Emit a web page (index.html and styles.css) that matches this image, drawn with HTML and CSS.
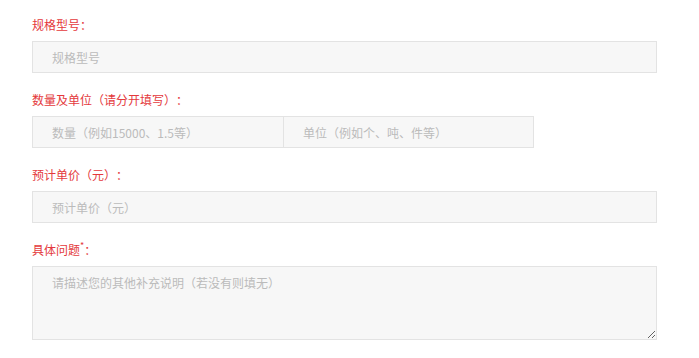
FILE: index.html
```html
<!DOCTYPE html>
<html lang="zh-CN">
<head>
<meta charset="utf-8">
<link rel="stylesheet" href="styles.css">
</head>
<body>
<form class="form">
  <div class="field">
    <label class="label">规格型号：</label>
    <input class="input" type="text" placeholder="规格型号">
  </div>
  <div class="field">
    <label class="label">数量及单位（请分开填写）：</label>
    <div class="pair">
      <input class="input half" type="text" placeholder="数量（例如15000、1.5等）">
      <input class="input half second" type="text" placeholder="单位（例如个、吨、件等）">
    </div>
  </div>
  <div class="field">
    <label class="label">预计单价（元）：</label>
    <input class="input" type="text" placeholder="预计单价（元）">
  </div>
  <div class="field">
    <label class="label">具体问题<sup class="star">*</sup>：</label>
    <textarea class="input area" placeholder="请描述您的其他补充说明（若没有则填无）"></textarea>
  </div>
</form>
</body>
</html>
```

FILE: styles.css
```css
* { box-sizing: border-box; }
html, body { margin: 0; padding: 0; background: #fff; }
body {
  font-family: "Noto Sans CJK SC", "Noto Sans", sans-serif;
  font-size: 12px;
  text-spacing-trim: space-all;
}
.form {
  padding: 15px 42px 0 32px;
  display: flex;
  flex-direction: column;
  gap: 17px;
}
.field {
  display: flex;
  flex-direction: column;
  gap: 6px;
}
.label {
  color: #e4393c;
  line-height: 20px;
  height: 20px;
}
.star {
  font-size: 9px;
  vertical-align: top;
  line-height: 12px;
}
.input {
  display: block;
  width: 625px;
  height: 32px;
  border: 1px solid #e3e3e3;
  background: #f7f7f7;
  padding: 0 19px;
  font-family: inherit;
  font-size: 12px;
  color: #333;
  outline: none;
  margin: 0;
  text-spacing-trim: space-all;
}
.input::placeholder { color: #bbb; }
.pair { display: flex; }
.half { width: 252px; }
.second { width: 250px; border-left: 0; }
.area {
  height: 74px;
  padding: 6px 19px;
  resize: vertical;
  line-height: 20px;
}
```
